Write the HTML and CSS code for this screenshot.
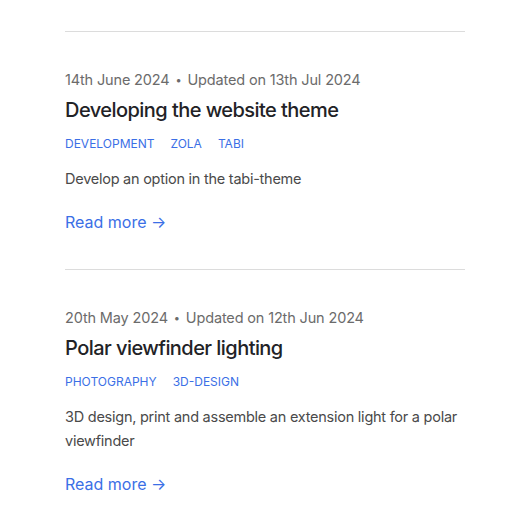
FILE: index.html
```html
<!DOCTYPE html>
<html>
<head>
<meta charset="utf-8">
<link rel="stylesheet" href="styles.css">
</head>
<body>
<main class="list">
  <hr class="sep">
  <article class="post">
    <div class="meta">14th June 2024 <span class="dot">•</span> Updated on 13th Jul 2024</div>
    <h2 class="title">Developing the website theme</h2>
    <ul class="tags"><li>DEVELOPMENT</li><li>ZOLA</li><li>TABI</li></ul>
    <p class="desc">Develop an option in the tabi-theme</p>
    <a class="more" href="#">Read more →</a>
  </article>
  <hr class="sep">
  <article class="post">
    <div class="meta">20th May 2024 <span class="dot">•</span> Updated on 12th Jun 2024</div>
    <h2 class="title">Polar viewfinder lighting</h2>
    <ul class="tags"><li>PHOTOGRAPHY</li><li>3D-DESIGN</li></ul>
    <p class="desc">3D design, print and assemble an extension light for a polar viewfinder</p>
    <a class="more" href="#">Read more →</a>
  </article>
</main>
</body>
</html>
```
FILE: styles.css
```css
html, body { margin: 0; padding: 0; background: #fff; }
body { font-family: Inter, "Noto Sans", sans-serif; color: #222226; }
.list { width: 400px; margin: 0 0 0 65px; padding-top: 31px; }
.sep { border: 0; border-top: 1px solid #dcdcdc; margin: 0; height: 0; }
.post { padding: 38px 0 35px; }
.meta { font-size: 14.5px; line-height: 20px; color: #6b6b6b; letter-spacing: -0.15px; }
.dot { font-size: 11px; margin: 0 2px; vertical-align: 1px; }
.title { font-size: 20px; font-weight: 550; line-height: 28px; margin: 6px 0 0; letter-spacing: -0.55px; }
.tags { list-style: none; margin: 12px 0 0; padding: 0; display: flex; gap: 16px; font-size: 12px; line-height: 16px; color: #3b6fe6; }
.desc { font-size: 14.5px; line-height: 24px; color: #4a4a4a; margin: 15px 0 0; letter-spacing: -0.25px; }
.more { display: inline-block; margin-top: 19px; font-size: 16px; line-height: 24px; color: #3b6fe6; text-decoration: none; }
```
